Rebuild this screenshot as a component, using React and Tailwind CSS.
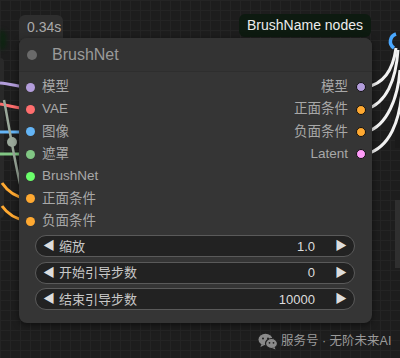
import React from 'react';

const inputs = [
  { label: '模型', color: '#b39ddb' },
  { label: 'VAE', color: '#ff6e6e' },
  { label: '图像', color: '#64b5f6' },
  { label: '遮罩', color: '#81c784' },
  { label: 'BrushNet', color: '#6bff6b' },
  { label: '正面条件', color: '#ffa931' },
  { label: '负面条件', color: '#ffa931' },
];

const outputs = [
  { label: '模型', color: '#b39ddb' },
  { label: '正面条件', color: '#ffa931' },
  { label: '负面条件', color: '#ffa931' },
  { label: 'Latent', color: '#ff9cf9' },
];

const widgets = [
  { label: '缩放', value: '1.0' },
  { label: '开始引导步数', value: '0' },
  { label: '结束引导步数', value: '10000' },
];

function Wires() {
  return (
    <svg className="absolute inset-0 pointer-events-none" width="400" height="358" viewBox="0 0 400 358">
      {/* links coming in from the left */}
      <path d="M0 83 C10 84 18 86 27 87" stroke="#b39ddb" strokeWidth="3" fill="none" />
      <path d="M0 104 C10 106 18 108 27 109" stroke="#ff6e6e" strokeWidth="3" fill="none" />
      <path d="M0 132 L27 132" stroke="#64b5f6" strokeWidth="3" fill="none" />
      <path d="M0 154 L27 154" stroke="#81c784" strokeWidth="3" fill="none" />
      <path d="M4 100 C8 120 14 160 22 192" stroke="#9aa89a" strokeWidth="2.5" fill="none" />
      <circle cx="12" cy="142" r="5" fill="#9aa89a" />
      <path d="M2 183 C8 192 16 197 27 199" stroke="#ffa931" strokeWidth="3" fill="none" />
      <path d="M2 206 C8 215 16 219 27 221" stroke="#ffa931" strokeWidth="3" fill="none" />
      {/* links leaving to the right */}
      <path d="M366 87 C384 84 393 70 396 48" stroke="#f2f2f2" strokeWidth="3" fill="none" />
      <path d="M366 109 C386 104 396 80 398 50" stroke="#f2f2f2" strokeWidth="3" fill="none" />
      <path d="M366 132 C388 126 398 96 400 70" stroke="#f2f2f2" strokeWidth="3" fill="none" />
      <path d="M366 154 C390 148 400 120 402 90" stroke="#f2f2f2" strokeWidth="3" fill="none" />
      <path d="M396 34 C390 36 388 44 394 48" stroke="#4aa8ff" strokeWidth="3.5" fill="none" />
    </svg>
  );
}

function WeChatIcon() {
  return (
    <svg width="20" height="17" viewBox="0 0 20 17">
      <ellipse cx="7.5" cy="6.5" rx="7" ry="5.8" fill="#8a8a8a" />
      <path d="M3.5 11 L2.5 14 L6.5 12 Z" fill="#8a8a8a" />
      <circle cx="5" cy="5.5" r="1" fill="#1f1f1f" />
      <circle cx="10" cy="5.5" r="1" fill="#1f1f1f" />
      <ellipse cx="13.5" cy="10.5" rx="6" ry="5" fill="#8a8a8a" stroke="#1f1f1f" strokeWidth="1.2" />
      <path d="M16.5 14 L17.5 16.5 L14 15 Z" fill="#8a8a8a" />
      <circle cx="11.5" cy="9.8" r="0.9" fill="#1f1f1f" />
      <circle cx="15.5" cy="9.8" r="0.9" fill="#1f1f1f" />
    </svg>
  );
}

export default function App() {
  return (
    <div
      className="relative w-[400px] h-[358px] overflow-hidden bg-[#1d1d1d] bg-[linear-gradient(#242424_1px,transparent_1px),linear-gradient(90deg,#242424_1px,transparent_1px)] bg-[size:10px_10px] font-['Liberation_Sans','Noto_Sans_CJK_SC',sans-serif]"
    >
      {/* neighbouring nodes at the edges */}
      <div className="absolute left-0 top-[30px] w-[6px] h-[20px] bg-[#0c2410] rounded-r-full blur-[2px]" />
      <div className="absolute left-0 top-[58px] w-[4px] h-[160px] bg-[#292929] rounded-r-[4px]" />
      <div className="absolute left-[395px] top-[58px] w-[5px] h-[90px] bg-[#1a1a1a]" />
      <div className="absolute left-[395px] top-[200px] w-[5px] h-[68px] bg-[#2f2f2f]" />

      <Wires />

      {/* timing badge */}
      <div className="absolute left-[19px] top-[15px] w-[44px] h-[26px] rounded-t-[6px] bg-[#2e2e2e] text-[#aaaaaa] text-[14px] pt-[2px] pl-[8px]">
        0.34s
      </div>

      {/* group badge */}
      <div className="absolute left-[239px] top-[14px] w-[132px] h-[23px] rounded-[6px] bg-[#0d1a10] text-[#ececec] text-[14px] font-medium flex items-center justify-center">
        BrushName nodes
      </div>

      {/* node */}
      <div className="absolute left-[19px] top-[38px] w-[353px] h-[285px] rounded-[8px] bg-[#353535] shadow-[0_2px_6px_rgba(0,0,0,0.5)] flex flex-col">
        <div className="h-[34px] flex items-center rounded-t-[8px] bg-[#333333] border-b border-[#2e2e2e]">
          <div className="ml-[8px] w-[10px] h-[10px] rounded-full bg-[#6a6a6a]" />
          <span className="ml-[15px] text-[16px] text-[#9a9a9a]">BrushNet</span>
        </div>

        <div className="relative pt-[4px]">
          {inputs.map((s) => (
            <div key={s.label} className="h-[22.35px] flex items-center">
              <span className="ml-[7px] w-[9px] h-[9px] rounded-full" style={{ backgroundColor: s.color }} />
              <span className="ml-[7px] text-[13.5px] text-[#a8a8a8]">{s.label}</span>
            </div>
          ))}
          <div className="absolute right-[6px] top-[4px] flex flex-col items-end">
            {outputs.map((s) => (
              <div key={s.label} className="h-[22.35px] flex items-center">
                <span className="text-[13.5px] text-[#a8a8a8]">{s.label}</span>
                <span
                  className="ml-[8px] w-[10px] h-[10px] rounded-full border border-[#111]"
                  style={{ backgroundColor: s.color }}
                />
              </div>
            ))}
          </div>
        </div>

        <div className="mt-[3px] pl-[16px] pr-[17px] flex flex-col gap-[4.5px]">
          {widgets.map((w) => (
            <div
              key={w.label}
              className="h-[22px] rounded-full bg-[#222222] border border-[#5a5a5a] flex items-center text-[13px]"
            >
              <span className="ml-[7px] text-[#dddddd] text-[12px]">◀</span>
              <span className="ml-[4px] text-[#c8c8c8]">{w.label}</span>
              <span className="ml-auto text-[#dddddd]">{w.value}</span>
              <span className="ml-[20px] mr-[7px] text-[#dddddd] text-[12px]">▶</span>
            </div>
          ))}
        </div>
      </div>

      {/* watermark */}
      <div className="absolute left-[258px] top-[332px] flex items-center gap-[3px] text-[12.5px] text-[#9a9a9a]">
        <WeChatIcon />
        <span>服务号 · 无阶未来AI</span>
      </div>
    </div>
  );
}
